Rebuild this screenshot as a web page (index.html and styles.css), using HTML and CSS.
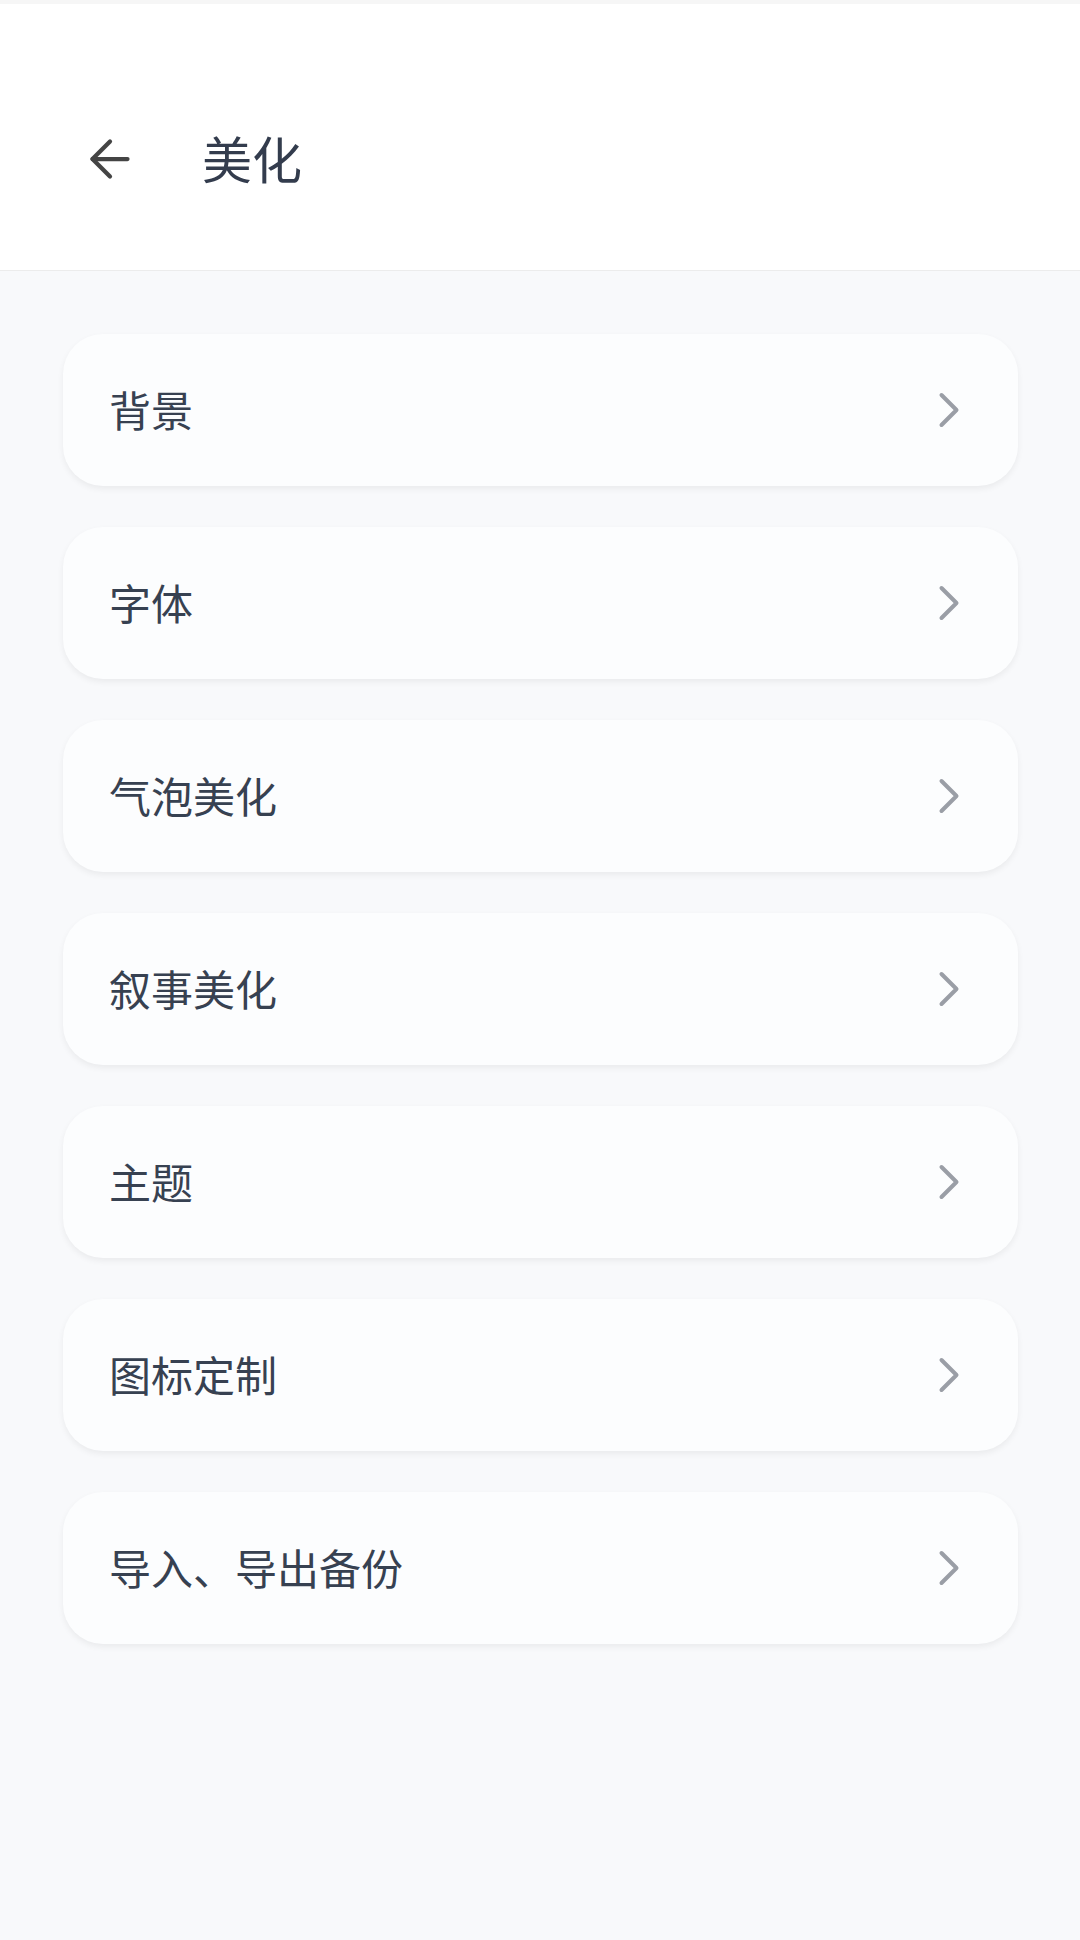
FILE: index.html
```html
<!DOCTYPE html>
<html lang="zh-CN">
<head>
    <meta charset="UTF-8">
    <meta name="viewport" content="width=device-width, initial-scale=1.0">
    <title>美化</title>
    <link rel="stylesheet" href="styles.css">
</head>
<body>
    <!-- Top bar -->
    <header class="top-bar">
        <button class="back-button" aria-label="返回">
            <svg width="60" height="60" viewBox="0 0 24 24" fill="none" stroke="currentColor" stroke-width="1.7" stroke-linecap="round" stroke-linejoin="round">
                <path d="M12 19l-7-7 7-7"/>
                <path d="M19 12H5"/>
            </svg>
        </button>
        <h1 class="page-title">美化</h1>
    </header>

    <!-- Settings list -->
    <main class="menu-list">
        <a class="menu-item" href="#"><span>背景</span><svg class="chevron" width="60" height="60" viewBox="0 0 24 24" fill="none" stroke="currentColor" stroke-width="1.6" stroke-linecap="round" stroke-linejoin="round"><path d="M9 18l6-6-6-6"/></svg></a>
        <a class="menu-item" href="#"><span>字体</span><svg class="chevron" width="60" height="60" viewBox="0 0 24 24" fill="none" stroke="currentColor" stroke-width="1.6" stroke-linecap="round" stroke-linejoin="round"><path d="M9 18l6-6-6-6"/></svg></a>
        <a class="menu-item" href="#"><span>气泡美化</span><svg class="chevron" width="60" height="60" viewBox="0 0 24 24" fill="none" stroke="currentColor" stroke-width="1.6" stroke-linecap="round" stroke-linejoin="round"><path d="M9 18l6-6-6-6"/></svg></a>
        <a class="menu-item" href="#"><span>叙事美化</span><svg class="chevron" width="60" height="60" viewBox="0 0 24 24" fill="none" stroke="currentColor" stroke-width="1.6" stroke-linecap="round" stroke-linejoin="round"><path d="M9 18l6-6-6-6"/></svg></a>
        <a class="menu-item" href="#"><span>主题</span><svg class="chevron" width="60" height="60" viewBox="0 0 24 24" fill="none" stroke="currentColor" stroke-width="1.6" stroke-linecap="round" stroke-linejoin="round"><path d="M9 18l6-6-6-6"/></svg></a>
        <a class="menu-item" href="#"><span>图标定制</span><svg class="chevron" width="60" height="60" viewBox="0 0 24 24" fill="none" stroke="currentColor" stroke-width="1.6" stroke-linecap="round" stroke-linejoin="round"><path d="M9 18l6-6-6-6"/></svg></a>
        <a class="menu-item" href="#"><span>导入、导出备份</span><svg class="chevron" width="60" height="60" viewBox="0 0 24 24" fill="none" stroke="currentColor" stroke-width="1.6" stroke-linecap="round" stroke-linejoin="round"><path d="M9 18l6-6-6-6"/></svg></a>
    </main>
</body>
</html>
```

FILE: styles.css
```css
/* General styling */
* {
    box-sizing: border-box;
}

body {
    font-family: "Noto Sans CJK SC", "Noto Sans", sans-serif;
    background-color: #f8f9fb;
    color: #374151;
    margin: 0;
    padding: 0;
    min-height: 100vh;
}

/* Top bar */
.top-bar {
    display: flex;
    align-items: center;
    height: 271px;
    padding: 44px 0 0 80px;
    background-color: #ffffff;
    border-top: 4px solid #f6f6f6;
    border-bottom: 1px solid #ececec;
}

.back-button {
    display: flex;
    padding: 0;
    background: none;
    border: none;
    color: #444444;
    cursor: pointer;
}

.page-title {
    margin: -4px 0 0 62px;
    font-size: 50px;
    font-weight: 400;
    color: #333c4d;
}

/* Menu list */
.menu-list {
    display: flex;
    flex-direction: column;
    gap: 41px;
    padding: 63px 62px 63px 63px;
}

.menu-item {
    display: flex;
    align-items: center;
    justify-content: space-between;
    height: 152px;
    padding: 0 39px 0 46px;
    background-color: #fcfdfe;
    border-radius: 40px;
    box-shadow: 0 3px 6px rgba(0, 0, 0, 0.06);
    text-decoration: none;
    color: #374151;
    font-size: 42px;
}

.menu-item span {
    margin-top: -4px;
}

.chevron {
    color: #9a9ea6;
}
```
